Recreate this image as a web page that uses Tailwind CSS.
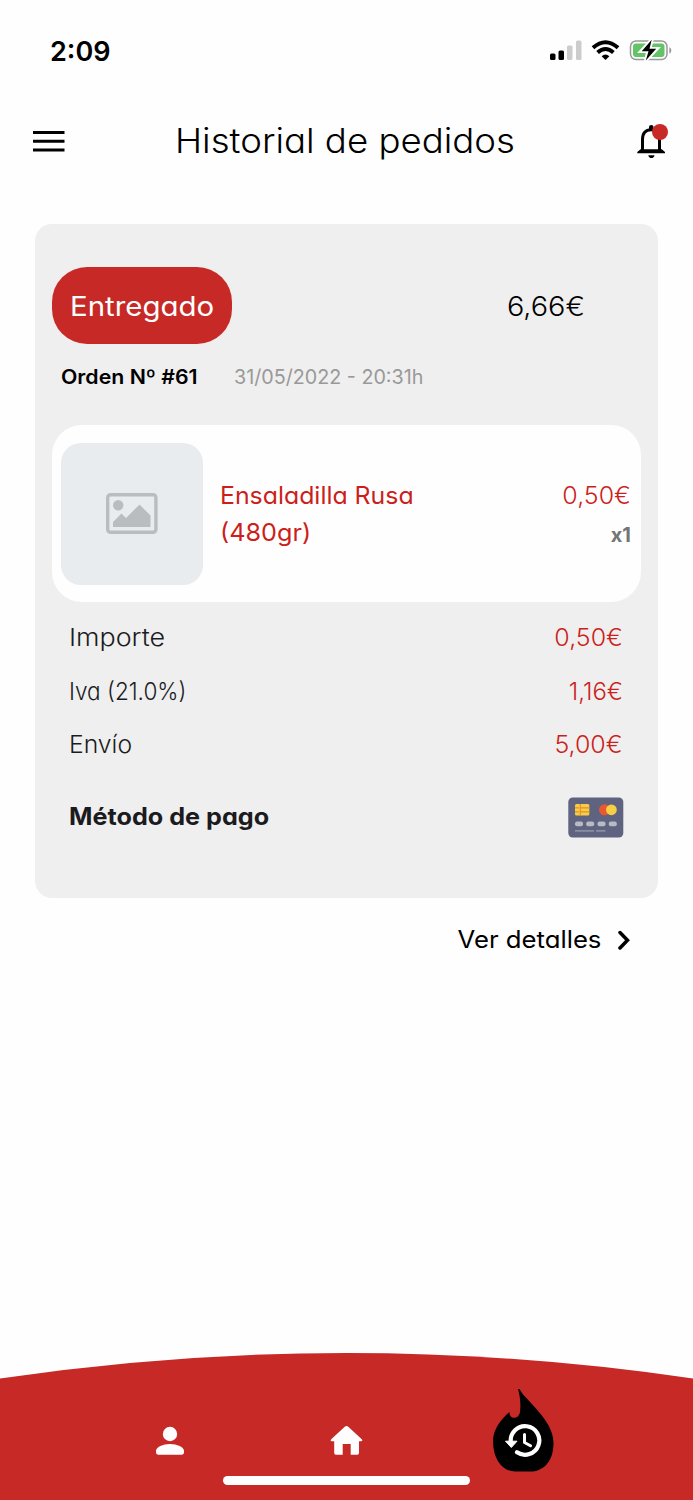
<!DOCTYPE html>
<html lang="es">
<head>
<meta charset="utf-8">
<meta name="viewport" content="width=device-width, initial-scale=1">
<title>Historial de pedidos</title>
<script src="https://cdn.jsdelivr.net/npm/@tailwindcss/browser@4"></script>
</head>
<body class="bg-[#fefefe] text-black font-['Inter','Open_Sans',sans-serif] [font-feature-settings:'cv11']">
<div class="relative flex h-[1500px] w-[693px] flex-col overflow-hidden whitespace-nowrap">
  <div class="flex h-[102px] items-center justify-between pr-[21px] pl-[50px]">
    <span class="pt-[2px] text-[27px] font-semibold">2:09</span>
    <div class="flex items-center">
      <svg class="h-[24px] w-[122px]" viewBox="0 0 122 24">
        <rect x="0" y="14.5" width="5.5" height="6.5" rx="1.5"/>
        <rect x="8.5" y="11.5" width="5.5" height="9.5" rx="1.5"/>
        <rect x="17" y="6.5" width="5.5" height="14.5" rx="1.5" fill="#ccc"/>
        <rect x="26" y="1.5" width="5.5" height="19.5" rx="1.5" fill="#ccc"/>
        <g fill="none" stroke="#000" stroke-width="4">
          <path d="M43 8.8Q55.5-2.3 68 8.8"/>
          <path d="M47.6 13.5Q55.5 6.5 63.4 13.5"/>
        </g>
        <path d="M51.6 17.2Q55.5 14 59.4 17.2L55.5 21Z"/>
        <rect x="80.5" y="2" width="36.5" height="18.6" rx="5.5" fill="none" stroke="#999" stroke-width="1.5"/>
        <path d="M119.3 8.2C122 9.2 122 13.6 119.3 14.6Z" fill="#999"/>
        <rect x="83" y="4.5" width="31.5" height="13.6" rx="3" fill="#62c466"/>
        <path d="M102.5-.5L90.5 12.6H97.7L95.3 22.5L107.5 9.4H100Z" stroke="#fefefe" stroke-width="3"/>
        <path d="M101.7.8L91.7 12.3H98.5L95.8 21.5L106.2 9.7H99.5Z"/>
      </svg>
    </div>
  </div>
  <header class="flex h-[78px] items-center pr-[24px] pl-[33px]">
    <svg class="h-[22px] w-[32px]" viewBox="0 0 32 22"><path d="M0 2.5H31.5M0 11.3H31.5M0 20H31.5" stroke="#000" stroke-width="3"/></svg>
    <h1 class="ml-[110px] flex-1 origin-left scale-x-[1.077] pb-[1px] text-[34px] font-[350]">Historial de pedidos</h1>
    <svg class="h-[36px] w-[32px]" viewBox="0 0 32 36">
      <path d="M5.5 28V16.5C5.5 10 8.5 6.7 14.2 6.7S22.5 10 22.5 16.5V28" fill="none" stroke="#000" stroke-width="3"/>
      <path d="M12 6.500V4Q12 2 14.300 2Q16.500 2 16.500 4V6.500ZM.3 30.300V29L3.500 26.300H24.800L28 29V30.300ZM11.300 32.200H17.500Q17 35 14.400 35Q11.900 35 11.300 32.200Z"/>
      <circle cx="23" cy="9" r="8" fill="#c72a26"/>
    </svg>
  </header>
  <main class="mt-[44px] px-[35px]">
    <section class="h-[674px] rounded-[17px] bg-[#efefef] px-[17px] pt-[43px]">
      <div class="flex h-[77px] items-center justify-between pr-[56px]">
        <span class="flex h-[77px] w-[180px] items-center justify-center rounded-[35px] bg-[#c72a26] pt-[4px] text-white"><span class="inline-block scale-x-[1.09] text-[27px] font-[370]">Entregado</span></span>
        <span class="origin-right scale-x-[1.07] pt-[4px] text-[27px] font-[350]">6,66€</span>
      </div>
      <div class="flex h-[65px] items-center pl-[9px] text-[20px]">
        <strong class="w-[173px] origin-left scale-x-[1.065] font-semibold">Orden Nº #61</strong>
        <span class="origin-left scale-x-[0.985] font-[370] text-[#999]">31/05/2022 - 20:31h</span>
      </div>
      <article class="mt-[16px] flex h-[177px] rounded-[30px] bg-[#fefefe] p-[9px] pr-[10px] pt-[17px]">
        <div class="mt-[0.5px] flex size-[142px] items-center justify-center rounded-[20px] bg-[#e8ecef]">
          <svg class="h-[41px] w-[52px]" viewBox="0 0 52 41"><rect x="1.7" y="1.7" width="48.2" height="37.6" rx="2.8" fill="none" stroke="#b9bdbf" stroke-width="3.4"/><path d="M7 34V29L15.500 20.500L20 25L33.500 11.500L44.500 22.500V34Z" fill="#b9bdbf"/><circle cx="12.200" cy="12.300" r="5.200" fill="#b9bdbf"/></svg>
        </div>
        <div class="flex flex-1 flex-col items-start pt-[36px] pl-[17px] text-[24px] leading-[36.5px] font-[370] text-[#cc1f1c]"><span class="origin-left scale-x-[1.035]">Ensaladilla Rusa</span><span class="origin-left scale-x-[1.05]">(480gr)</span></div>
        <div class="flex flex-col items-end pt-[36px] text-[24px] leading-[36.5px] text-[#cc1f1c]"><span class="origin-right scale-x-[1.04] font-[350]">0,50€</span><strong class="mt-[2px] text-[20px] font-bold text-[#757575]">x1</strong></div>
      </article>
      <dl class="pt-[9px] pr-[18px] pl-[17px] text-[24px] font-[350] text-[#1b1b1f]">
        <div class="flex h-[54px] items-center justify-between"><dt class="origin-left scale-x-[1.12]">Importe</dt><dd class="origin-right scale-x-[1.04] text-[#cc1f1c]">0,50€</dd></div>
        <div class="flex h-[53px] items-center justify-between"><dt class="origin-left scale-x-[0.94]">Iva (21.0%)</dt><dd class="text-[#cc1f1c]">1,16€</dd></div>
        <div class="flex h-[54px] items-center justify-between"><dt class="origin-left scale-x-[1.03]">Envío</dt><dd class="origin-right scale-x-[1.04] text-[#cc1f1c]">5,00€</dd></div>
      </dl>
      <div class="mt-[25px] flex h-[40px] items-center justify-between pr-[17px] pl-[17px] text-[#1b1b1f]">
        <strong class="origin-left scale-x-[1.05] text-[24px] font-bold">Método de pago</strong>
        <svg class="h-[41px] w-[56px]" viewBox="0 0 56 41">
          <rect x=".3" y=".5" width="55" height="40" rx="4.500" fill="#5f6380"/>
          <rect x="7" y="7" width="14.300" height="11.500" rx="1.500" fill="#f7cf46"/>
          <path d="M7 10.800H11M7 14.800H11M12.300 7V18.500M12.300 10.800H21.300M12.300 14.800H21.300" stroke="#e78d2f" stroke-width="1.200"/>
          <circle cx="36.500" cy="12.800" r="5.500" fill="#e9582f"/><circle cx="43.400" cy="12.800" r="5.400" fill="#f7cf46"/>
          <g fill="#b8bac5"><rect x="7" y="24.500" width="8" height="4.700" rx="2"/><rect x="18.200" y="24.500" width="8" height="4.700" rx="2"/><rect x="29.500" y="24.500" width="8" height="4.700" rx="2"/><rect x="40.800" y="24.500" width="8" height="4.700" rx="2"/></g>
          <path d="M7 33.800H26M28 33.800H37.500" stroke="#8b8ea3" stroke-width="1.800"/>
        </svg>
      </div>
    </section>
    <a class="flex h-[84px] items-center justify-end pr-[27px]"><span class="origin-right scale-x-[1.07] text-[24px]">Ver detalles</span><svg class="ml-[17px] h-[20px] w-[13px]" viewBox="0 0 13 20"><path d="M2 2.500L9.500 10.200L2 18" fill="none" stroke="#000" stroke-width="3.500" stroke-linecap="round"/></svg></a>
  </main>
  <nav class="relative mt-auto h-[148px]">
    <svg class="absolute inset-0 h-[148px] w-[693px]" viewBox="0 0 693 148"><path d="M0 26.500Q346.500-24.500 693 26.500V148H0Z" fill="#c72a26"/></svg>
    <div class="relative flex h-full items-start pt-[36px] pl-[155px]">
      <svg class="mt-[37px] h-[30px] w-[30px]" viewBox="0 0 30 30" fill="#fefefe"><circle cx="15" cy="9" r="7.200"/><path d="M1 27V26C1 22 8 19 15 19S29 22 29 26V27Q29 29.700 26.500 29.700H3.500Q1 29.700 1 27Z"/></svg>
      <svg class="mt-[37px] ml-[145px] h-[31px] w-[33px]" viewBox="0 0 33 31" fill="#fefefe"><path d="M1.200 14.300L15 1.500Q16.500 .3 18 1.500L31.800 14.300Q33.200 16.200 31 16.200H29V28Q29 29.700 27.300 29.700H20.700V19H12.700V29.700H6Q4.200 29.700 4.200 28V16.200H2Q-.2 16.200 1.200 14.300Z"/></svg>
      <svg class="ml-[130px] h-[85px] w-[62px]" viewBox="0 0 62 85">
        <path d="M26.500 1C31 11 61 32 60.500 55C60.500 76 48 83.500 38 83.500H22C10 83.500 0 72 0 53C0 41 9 30 16.500 24C16 31.500 25.500 32 27 24C28 16 27 8 25 1Z"/>
        <g fill="none" stroke="#fefefe" stroke-width="4.200" stroke-linecap="round" stroke-linejoin="round"><path d="M17.800 54A14.300 14.300 0 1 1 24 64.300"/><path d="M31.500 46.500V54.500L37.500 57.800" stroke-width="3"/></g>
        <path d="M12.500 53.200H24L18.300 59.500Z" fill="#fefefe" stroke="#fefefe" stroke-width="1" stroke-linejoin="round"/>
      </svg>
    </div>
    <div class="absolute bottom-[15px] left-[223px] h-[9px] w-[247px] rounded-full bg-[#fefefe]"></div>
  </nav>
</div>
</body>
</html>
